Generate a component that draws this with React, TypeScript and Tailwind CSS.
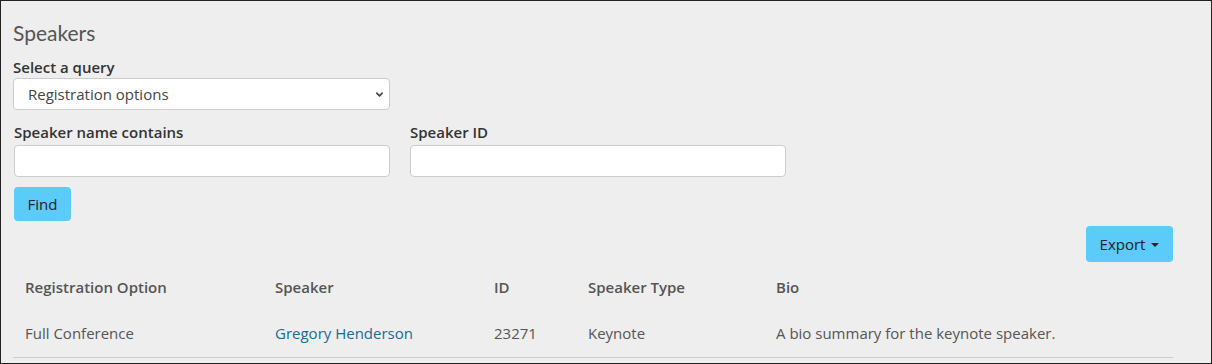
import { ChevronDown } from "lucide-react";

const rows = [
  {
    option: "Full Conference",
    speaker: "Gregory Henderson",
    id: "23271",
    type: "Keynote",
    bio: "A bio summary for the keynote speaker.",
  },
];

export default function App() {
  return (
    <div
      className="h-[364px] w-full border border-[#222] bg-[#eeeeee] text-[#333] overflow-hidden"
      style={{ fontFamily: "'Open Sans', 'Liberation Sans', sans-serif" }}
    >
      <div className="pl-[12px] pr-[38px] pt-[19px]">
        <h2
          className="text-[21px] leading-[26px] text-[#555]"
          style={{ fontFamily: "Lato, 'Open Sans', sans-serif" }}
        >
          Speakers
        </h2>

        <label className="mt-[11px] block text-[15px] font-semibold leading-[20px]">Select a query</label>
        <div className="relative mt-[1px] w-[377px]">
          <select className="h-[32px] w-full appearance-none rounded-[4px] border border-[#ccc] bg-white pl-[14px] text-[15px] text-[#444] outline-none">
            <option>Registration options</option>
          </select>
          <ChevronDown className="pointer-events-none absolute right-[5px] top-[11px] h-[11px] w-[11px] text-[#444]" strokeWidth={3.5} />
        </div>

        <div className="mt-[12px] flex gap-[20px] pl-[1px]">
          <div className="w-[376px]">
            <label className="block text-[15px] font-semibold leading-[20px]">Speaker name contains</label>
            <input className="mt-[3px] h-[32px] w-full rounded-[4px] border border-[#ccc] bg-white outline-none" />
          </div>
          <div className="w-[376px]">
            <label className="block text-[15px] font-semibold leading-[20px]">Speaker ID</label>
            <input className="mt-[3px] h-[32px] w-full rounded-[4px] border border-[#ccc] bg-white outline-none" />
          </div>
        </div>

        <button className="ml-[1px] mt-[10px] h-[34px] w-[57px] rounded-[4px] bg-[#5bcbfa] text-[15px] font-medium text-[#222]">
          Find
        </button>

        <div className="mt-[5px] flex justify-end">
          <button className="flex h-[36px] w-[87px] items-center justify-center gap-[6px] rounded-[4px] bg-[#5bcbfa] text-[15px] text-[#222]">
            Export
            <span className="mt-[1px] h-0 w-0 border-x-[4px] border-t-[4px] border-x-transparent border-t-[#222]" />
          </button>
        </div>

        <table className="mt-[4px] w-full text-left text-[15px]">
          <thead>
            <tr className="h-[43px] align-middle">
              <th className="w-[250px] pl-[12px] font-semibold text-[#555]">Registration Option</th>
              <th className="w-[219px] pl-[12px] font-semibold text-[#555]">Speaker</th>
              <th className="w-[94px] pl-[12px] font-semibold text-[#555]">ID</th>
              <th className="w-[188px] pl-[12px] font-semibold text-[#555]">Speaker Type</th>
              <th className="pl-[12px] font-semibold text-[#555]">Bio</th>
            </tr>
          </thead>
          <tbody>
            {rows.map((r) => (
              <tr key={r.id} className="h-[48px] border-b border-[#ccc] align-middle text-[#555]">
                <td className="pl-[12px]">{r.option}</td>
                <td className="pl-[12px] text-[#1a6a96]">{r.speaker}</td>
                <td className="pl-[12px]">{r.id}</td>
                <td className="pl-[12px]">{r.type}</td>
                <td className="pl-[12px]">{r.bio}</td>
              </tr>
            ))}
          </tbody>
        </table>
      </div>
    </div>
  );
}
